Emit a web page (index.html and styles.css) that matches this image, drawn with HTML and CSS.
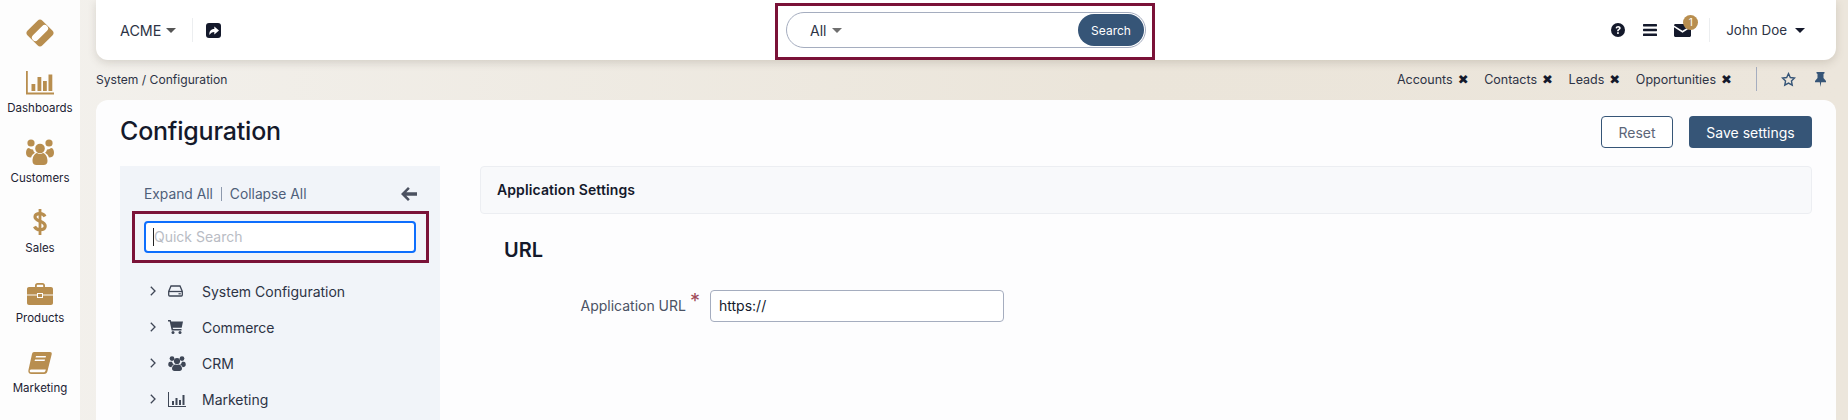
FILE: index.html
```html
<!DOCTYPE html>
<html lang="en">
<head>
<meta charset="utf-8">
<title>Configuration</title>
<link rel="stylesheet" href="styles.css">
</head>
<body>
<div class="app">
  <nav class="rail">
    <div class="logo">
      <svg width="32" height="32" viewBox="0 0 32 32"><rect x="5.5" y="5.5" width="21" height="21" rx="3.5" transform="rotate(45 16 16)" fill="#b88e4f"/><rect x="6" y="12.6" width="20" height="6.8" rx="3.4" transform="rotate(-45 16 16)" fill="#fff"/></svg>
    </div>
    <a class="rail-item">
      <svg width="28" height="24" viewBox="0 0 28 24" fill="#b88e4f"><path d="M0 0h1.8v21.5H28V23.5H0z"/><rect x="5.500" y="13" width="3.800" height="7"/><rect x="11.500" y="6" width="3.800" height="14"/><rect x="17" y="10" width="3.800" height="10"/><rect x="22.500" y="3.500" width="3.800" height="16.500"/></svg>
      <span>Dashboards</span>
    </a>
    <a class="rail-item">
      <svg width="28" height="26" viewBox="0 0 28 26" fill="#b88e4f"><circle cx="5" cy="4" r="3.600"/><circle cx="23" cy="4" r="3.600"/><circle cx="14" cy="9.500" r="4.800"/><path d="M0 14c0-3 1-5 3-5 1 1 2 1.500 4 1.400.3 1.500 1 2.600 2 3.400-2 1-3.400 2.700-3.900 4.700C2 18.500 0 17 0 14zM28 14c0-3-1-5-3-5-1 1-2 1.500-4 1.400-.3 1.500-1 2.600-2 3.400 2 1 3.400 2.700 3.900 4.700C26 18.500 28 17 28 14z"/><path d="M6.500 22c0-4 2-7.500 4.500-8 1.800 1.400 4.200 1.400 6 0 2.500.5 4.500 4 4.500 8 0 2.500-1.500 4-4 4h-7c-2.500 0-4-1.500-4-4z"/></svg>
      <span>Customers</span>
    </a>
    <a class="rail-item">
      <svg width="14" height="26" viewBox="0 0 14 26" fill="none" stroke="#b88e4f" stroke-width="3.200"><path d="M12 7.500C11 5.500 9.500 4.700 7 4.700 4 4.700 2 6 2 8c0 2.200 2 3 5 4.200 3.200 1.200 5.200 2.300 5.200 4.800 0 2.300-2.200 3.700-5.200 3.700-2.700 0-4.500-1-5.500-3.200"/><path d="M7 0v26" stroke-width="2.800"/></svg>
      <span>Sales</span>
    </a>
    <a class="rail-item">
      <svg width="26" height="22" viewBox="0 0 26 22" fill="#b88e4f"><path d="M8 4V2.500C8 1 9 0 10.500 0h5C17 0 18 1 18 2.500V4h-1.800V2.500c0-.4-.3-.7-.7-.7h-5c-.4 0-.7.3-.7.700V4z"/><path d="M2 4h22c1.100 0 2 .9 2 2v5.500H16V10h-6v1.500H0V6c0-1.100.9-2 2-2z"/><path d="M0 12.500h10V15h6v-2.500h10V20c0 1.100-.9 2-2 2H2c-1.100 0-2-.9-2-2z"/><rect x="11" y="11" width="4" height="3"/></svg>
      <span>Products</span>
    </a>
    <a class="rail-item">
      <svg width="24" height="23" viewBox="0 0 24 23" fill="#b88e4f"><path d="M6 0h16c1.300 0 2 .9 1.700 2.200L19.500 19c-.4 1.700-1.500 3-3.500 3H3.500C1.200 22 0 20.300.400 18.200L4 2C4.300.8 5 0 6 0zM8 4l-.4 1.500h10L18 4zM7 7.500l-.4 1.500h10l.4-1.500zM3.500 17.500c-1.200 0-1.700.6-1.800 1.300-.1.800.4 1.500 1.500 1.500H15.500c.9 0 1.500-.4 1.900-1.300.2-.8.300-1 .4-1.500z" fill-rule="evenodd"/></svg>
      <span>Marketing</span>
    </a>
  </nav>

  <div class="workspace">
    <header class="topbar">
      <div class="top-left">
        <span class="org">ACME <i class="caret"></i></span>
        <span class="vline"></span>
        <svg class="share" width="15" height="15" viewBox="0 0 15 15"><rect width="15" height="15" rx="3" fill="#14192b"/><path d="M3.500 12c-.6-3.500 1.300-6 4.800-6V3.500L13 7.500l-4.700 4V9C6 9 4.700 10 3.500 12z" fill="#fff"/></svg>
      </div>
      <div class="search-mark">
        <form class="search-pill">
          <span class="scope">All <i class="caret grey"></i></span>
          <button class="search-btn" type="button">Search</button>
        </form>
      </div>
      <div class="top-right">
        <svg width="14" height="14" viewBox="0 0 14 14"><circle cx="7" cy="7" r="7" fill="#14192b"/><path d="M4.600 5.300C4.800 3.800 5.800 3 7.200 3c1.400 0 2.500.9 2.500 2.100 0 1-.6 1.500-1.300 2-.5.300-.7.600-.7 1.100H6.100c0-1 .4-1.500 1-1.900.5-.4.900-.6.900-1.100 0-.5-.4-.8-.9-.8-.6 0-1 .4-1.100 1z" fill="#fff"/><rect x="6.100" y="9.200" width="1.700" height="1.700" fill="#fff"/></svg>
        <svg width="14" height="12" viewBox="0 0 14 12" fill="#14192b"><rect width="14" height="2.400" rx=".6"/><rect y="4.800" width="14" height="2.400" rx=".6"/><rect y="9.600" width="14" height="2.400" rx=".6"/></svg>
        <span class="mail">
          <svg width="17" height="13" viewBox="0 0 17 13" fill="#14192b"><path d="M1.500 0h14c.8 0 1.500.6 1.500 1.400L8.500 6.800 0 1.400C0 .6.700 0 1.500 0z"/><path d="M0 3.300l8.500 5.400L17 3.300V11.500c0 .8-.7 1.500-1.500 1.500h-14C.7 13 0 12.300 0 11.500z"/></svg>
          <b class="badge">1</b>
        </span>
        <span class="vline"></span>
        <span class="user">John Doe <i class="caret dark"></i></span>
      </div>
    </header>

    <div class="crumbs">
      <span>System / Configuration</span>
      <div class="pins">
        <a>Accounts<em>✖</em></a>
        <a>Contacts<em>✖</em></a>
        <a>Leads<em>✖</em></a>
        <a>Opportunities<em>✖</em></a>
        <span class="pin-line"></span>
        <svg class="star" width="15" height="15" viewBox="0 0 24 24" fill="none" stroke="#365577" stroke-width="2.200"><path d="M12 2.500l2.900 6.300 6.800.8-5 4.700 1.300 6.800-6-3.400-6 3.400 1.300-6.800-5-4.700 6.800-.8z"/></svg>
        <svg class="pin" width="11" height="15" viewBox="0 0 11 15" fill="#365577"><path d="M1.500 0h8v1.300L8.500 2v4l2.500 3v1.200H6.200L5.500 15l-.7-4.800H0V9l2.500-3V2L1.500 1.300z"/></svg>
      </div>
    </div>

    <main class="card">
      <div class="page-head">
        <h1>Configuration</h1>
        <div class="actions">
          <button class="btn ghost" type="button">Reset</button>
          <button class="btn solid" type="button">Save settings</button>
        </div>
      </div>
      <div class="columns">
        <aside class="tree">
          <div class="tree-head">
            <span class="links"><a>Expand All</a><i></i><a>Collapse All</a></span>
            <svg width="16" height="14" viewBox="0 0 16 14" fill="#4b5160"><path d="M7 0l1.800 1.800L5.300 5.300H16v3.400H5.300l3.500 3.500L7 14 0 7z"/></svg>
          </div>
          <div class="quick-mark">
            <div class="quick-input"><span class="cursor"></span><span class="ph">Quick Search</span></div>
          </div>
          <ul class="tree-list">
            <li>
              <svg class="chev" width="6" height="10" viewBox="0 0 6 10" fill="none" stroke="#3e4656" stroke-width="1.300"><path d="M.8.800L5 5 .8 9.200"/></svg>
              <span class="t-ico"><svg width="15" height="12" viewBox="0 0 15 12" fill="none" stroke="#3e4656" stroke-width="1.300"><path d="M3 1h9l2.300 5.500V10c0 .6-.5 1-1 1H1.700c-.5 0-1-.4-1-1V6.500z"/><path d="M1 6.500h13"/><path d="M10.500 8.800h2.300" stroke-width="1.200"/></svg></span>
              System Configuration
            </li>
            <li>
              <svg class="chev" width="6" height="10" viewBox="0 0 6 10" fill="none" stroke="#3e4656" stroke-width="1.300"><path d="M.8.800L5 5 .8 9.200"/></svg>
              <span class="t-ico"><svg width="15" height="14" viewBox="0 0 15 14" fill="#3e4656"><path d="M0 0h2.700l.5 1.500H15l-1.300 6.200H4.700l.3 1.400h8.500v1.400H3.700L1.700 1.400H0z"/><circle cx="5" cy="12.500" r="1.500"/><circle cx="12" cy="12.500" r="1.500"/></svg></span>
              Commerce
            </li>
            <li>
              <svg class="chev" width="6" height="10" viewBox="0 0 6 10" fill="none" stroke="#3e4656" stroke-width="1.300"><path d="M.8.800L5 5 .8 9.200"/></svg>
              <span class="t-ico"><svg width="18" height="15" viewBox="0 0 28 24" fill="#3e4656"><circle cx="6" cy="4" r="3.800"/><circle cx="22" cy="4" r="3.800"/><circle cx="14" cy="8" r="5"/><path d="M0 14c0-3 1-5 3-5h3c.5 2 1.500 3.500 3 4.500-2 1-3.500 2.500-4 4.500C2 18 0 16.500 0 14zM28 14c0-3-1-5-3-5h-3c-.5 2-1.500 3.500-3 4.500 2 1 3.500 2.500 4 4.500 3 0 5-1.500 5-4z"/><path d="M6 20c0-3 2-6 5-6.500 2 1 4 1 6 0 3 .5 5 3.500 5 6.500 0 2.500-1.500 4-4 4h-8c-2.500 0-4-1.500-4-4z"/></svg></span>
              CRM
            </li>
            <li>
              <svg class="chev" width="6" height="10" viewBox="0 0 6 10" fill="none" stroke="#3e4656" stroke-width="1.300"><path d="M.8.800L5 5 .8 9.200"/></svg>
              <span class="t-ico"><svg width="18" height="15" viewBox="0 0 18 15" fill="#3e4656"><path d="M0 0h1v14h17v1H0z"/><rect x="4" y="9" width="2" height="4"/><rect x="7.500" y="6" width="2" height="7"/><rect x="11" y="8" width="2" height="5"/><rect x="14.500" y="3" width="2" height="10"/></svg></span>
              Marketing
            </li>
          </ul>
        </aside>
        <section class="form-area">
          <div class="section-bar">Application Settings</div>
          <h2>URL</h2>
          <div class="field">
            <label>Application URL<sup>*</sup></label>
            <div class="text-input">https://</div>
          </div>
        </section>
      </div>
    </main>
  </div>
</div>
</body>
</html>
```

FILE: styles.css
```css
* { box-sizing: border-box; }
html, body { margin: 0; height: 420px; overflow: hidden; }
body {
  font-family: Inter, "Liberation Sans", sans-serif;
  color: #14192b;
  background: linear-gradient(90deg, #f3f1ed 0%, #ebe5da 60%, #ece6dc 100%);
}
.app { display: flex; height: 420px; }

.rail { width: 80px; flex: none; background: #fdfdfd; display: flex; flex-direction: column; align-items: center; }
.logo { height: 50px; padding-top: 17px; flex: none; }
.logo svg { display: block; }
.rail-item { height: 70px; flex: none; width: 100%; display: flex; flex-direction: column; align-items: center; justify-content: flex-end; padding-bottom: 4px; gap: 5px; font-size: 11.5px; color: #1c2233; }
.rail-item span { line-height: 16px; }

.workspace { flex: 1; min-width: 0; padding: 0 12px 0 16px; display: flex; flex-direction: column; }

.topbar { height: 60px; flex: none; background: #fff; border-radius: 0 0 12px 12px; box-shadow: 0 3px 8px rgba(90, 80, 60, .18); display: grid; grid-template-columns: 1fr auto 1fr; position: relative; }
.top-left { display: flex; align-items: center; padding-left: 24px; font-size: 14.3px; }
.org { color: #2d3345; display: flex; align-items: center; gap: 5px; }
.vline { width: 1px; height: 24px; background: #eceef0; }
.top-left .vline { margin: 0 13px 0 16px; }
.caret { display: inline-block; width: 0; height: 0; border-left: 5px solid transparent; border-right: 5px solid transparent; border-top: 5px solid #555; }
.caret.grey { border-top-color: #6f6f6f; }
.caret.dark { border-top-color: #14192b; margin-left: 4px; }
.share { display: block; }

.search-mark { margin: 3px 0 0 -2px; height: 57px; width: 380px; border: 3px solid #7a1238; padding: 6px 6px 6px 8px; }
.search-pill { height: 36px; border: 1px solid #a5adbf; border-radius: 18px; display: flex; justify-content: space-between; align-items: center; padding: 0 1px 0 23px; margin: 0; }
.scope { font-size: 14px; display: flex; align-items: center; gap: 6px; color: #2d3345; }
.search-btn { width: 66px; height: 32px; border: 0; border-radius: 16px; background: #365577; color: #fff; font: 12px Inter, sans-serif; padding: 0; }

.top-right { display: flex; align-items: center; justify-content: flex-end; padding-right: 31px; gap: 18px; }
.mail { position: relative; display: flex; margin-left: -1px; }
.badge { position: absolute; left: 9px; top: -9px; width: 15px; height: 15px; border-radius: 50%; background: #b88e4f; color: #fff; font: 400 10px/15px Inter, sans-serif; text-align: center; }
.top-right .vline { margin-right: -2px; }
.user { font-size: 13.4px; color: #2d3345; display: flex; align-items: center; gap: 4px; white-space: nowrap; }

.crumbs { height: 40px; flex: none; display: flex; align-items: center; justify-content: space-between; font-size: 12.1px; color: #2d3345; padding-bottom: 2px; }
.pins { display: flex; align-items: center; padding-right: 10px; font-size: 12.5px; }
.pins a { margin-right: 17.5px; white-space: nowrap; display: flex; align-items: center; }
.pins em { font-style: normal; font-size: 13px; line-height: 1; width: 9px; margin-left: 5px; color: #14192b; font-family: "DejaVu Sans", sans-serif; }
.pin-line { width: 1px; height: 24px; background: #a5adbf; margin: 0 24px 0 8.5px; }
.pin { margin-left: 19px; }

.card { flex: 1; background: #fdfdfe; border-radius: 12px 12px 0 0; padding: 0 24px; overflow: hidden; }
.page-head { height: 66px; display: flex; justify-content: space-between; align-items: flex-start; padding-top: 16px; }
h1 { margin: 0; font-size: 25px; font-weight: 500; line-height: 30px; color: #14192b; letter-spacing: -.2px; }
.actions { display: flex; gap: 16px; }
.btn { height: 32px; border-radius: 4px; font: 14px Inter, sans-serif; padding: 0; }
.ghost { width: 72px; background: #fff; border: 1px solid #365577; color: #5c6678; }
.solid { width: 123px; background: #365577; border: 0; color: #fff; }

.columns { display: flex; gap: 40px; }
.tree { width: 320px; flex: none; height: 254px; background: #f1f4f9; padding: 16px 12px 0; }
.tree-head { height: 22px; padding: 2px 11px 0 12px; display: flex; justify-content: space-between; align-items: center; font-size: 13.8px; color: #4f5f7a; }
.links { display: flex; align-items: center; }
.links i { width: 1px; height: 14px; background: #8d99ad; margin: 0 8px; }
.quick-mark { margin-top: 7px; height: 52px; width: 297px; border: 3px solid #7a1238; padding: 7px 9px; }
.quick-input { height: 32px; width: 272px; border: 2px solid #0d6efd; border-radius: 4px; background: #fff; display: flex; align-items: center; padding: 0 0 1px 7px; font-size: 14px; color: #b9bcc4; }
.cursor { width: 1px; height: 18px; background: #222; }
.tree-list { list-style: none; margin: 10px 0 0; padding: 0 0 0 18px; }
.tree-list li { height: 36px; display: flex; align-items: center; font-size: 14px; color: #2d3345; white-space: nowrap; }
.chev { flex: none; margin-right: 12px; }
.t-ico { width: 34px; display: flex; justify-content: flex-start; }

.form-area { flex: 1; min-width: 0; }
.section-bar { height: 48px; background: #f8f9fb; border: 1px solid #eceef2; border-radius: 4px; padding: 0 0 2px 16px; display: flex; align-items: center; font-size: 14px; font-weight: 600; color: #14192b; letter-spacing: .1px; }
h2 { margin: 0; padding: 24px 0 0 24px; font-size: 20px; font-weight: 600; line-height: 24px; color: #14192b; }
.field { display: flex; align-items: center; margin-top: 28px; }
.field label { width: 230px; padding: 0 10px 1px 0; text-align: right; font-size: 14px; color: #4a5264; white-space: nowrap; }
.field sup { color: #a04a5a; font-size: 20px; line-height: 0; margin-left: 4px; position: relative; top: 3px; }
.text-input { width: 294px; height: 32px; border: 1px solid #a5adbf; border-radius: 4px; background: #fff; padding-left: 8px; line-height: 29px; font-size: 14px; color: #14192b; }
```
